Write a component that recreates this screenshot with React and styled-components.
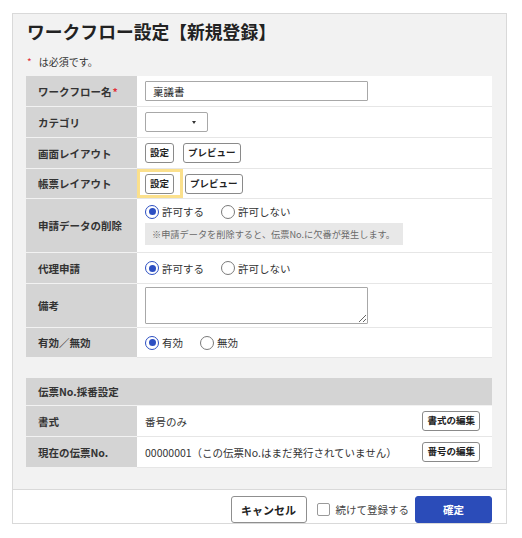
import React from 'react';
import styled, { createGlobalStyle, css } from 'styled-components';

const GlobalStyle = createGlobalStyle`
  * { box-sizing: border-box; }
  body {
    margin: 0;
    background: #ffffff;
    font-family: "Noto Sans CJK JP", "Noto Sans", sans-serif;
    color: #333;
  }
`;

const Panel = styled.div`
  width: 495px;
  margin: 13px 0 0 12px;
  background: #f2f2f2;
  border: 1px solid #d9d9d9;
`;

const Body = styled.div`
  padding: 5px 14px 21px 13px;
`;

const Title = styled.h1`
  margin: 0 0 0 1px;
  font-size: 17.8px;
  line-height: 24px;
  font-weight: bold;
  color: #222;
`;

const Required = styled.p`
  margin: 11px 0 6px 1px;
  font-size: 10px;
  line-height: 16px;
  color: #333;
`;

const Star = styled.span`
  color: #e2303a;
  margin-right: ${(p) => p.$gap ?? 0}px;
  margin-left: ${(p) => p.$lead ?? 0}px;
`;

const Table = styled.div`
  display: flex;
  flex-direction: column;
`;

const Row = styled.div`
  display: grid;
  grid-template-columns: 111px 1fr;
  min-height: ${(p) => p.$h}px;
  border-bottom: 1px solid #e6e6e6;
`;

const Label = styled.div`
  display: flex;
  align-items: center;
  padding-left: 12px;
  background: #d4d4d4;
  border-bottom: 1px solid #f2f2f2;
  margin-bottom: -1px;
  font-size: 10.5px;
  font-weight: bold;
  color: #333;
`;

const Value = styled.div`
  display: flex;
  flex-direction: ${(p) => (p.$stack ? 'column' : 'row')};
  align-items: ${(p) => (p.$stack ? 'flex-start' : 'center')};
  gap: ${(p) => p.$gap ?? 9}px;
  padding: ${(p) => (p.$stack ? '5px 0 4px 8px' : '0 12px 0 8px')};
  background: #ffffff;
  font-size: 10.5px;
  color: #333;
`;

const Spacer = styled.div`
  flex: 1;
`;

const TextInput = styled.div`
  width: 223px;
  height: 20px;
  border: 1px solid #a8a8a8;
  border-radius: 1px;
  padding-left: 7px;
  display: flex;
  align-items: center;
  font-size: 10.5px;
  color: #222;
`;

const Select = styled.div`
  width: 63px;
  height: 20px;
  border: 1px solid #a8a8a8;
  border-radius: 2px;
  background: #fff;
  display: flex;
  align-items: center;
  justify-content: flex-end;
  padding-right: 11px;
`;

const Caret = styled.span`
  width: 0;
  height: 0;
  border-left: 2.5px solid transparent;
  border-right: 2.5px solid transparent;
  border-top: 3px solid #333;
`;

const SmallButton = styled.button`
  height: 20px;
  padding: 0 4px;
  background: #fff;
  border: 1px solid #8a8a8a;
  border-radius: 3px;
  font-family: inherit;
  font-size: 9.5px;
  font-weight: bold;
  color: #222;
  line-height: 1;
`;

const FocusFrame = styled.div`
  display: flex;
  align-items: center;
  align-self: stretch;
  margin: 0 -7px 0 -8px;
  padding: 0 6px 0 5px;
  border: 3px solid #fbe08c;
`;

const RadioGroup = styled.div`
  display: flex;
  align-items: center;
  gap: 17px;
`;

const RadioItem = styled.label`
  display: flex;
  align-items: center;
  gap: 3px;
  font-size: 10.5px;
  color: #333;
`;

const RadioMark = styled.span`
  width: 14px;
  height: 14px;
  border-radius: 50%;
  background: #fff;
  border: 1px solid #7a7a7a;
  display: inline-flex;
  align-items: center;
  justify-content: center;
  ${(p) =>
    p.$on &&
    css`
      border: 1.5px solid #2c4fc2;
      &::after {
        content: '';
        width: 7px;
        height: 7px;
        border-radius: 50%;
        background: #2c4fc2;
      }
    `}
`;

const Note = styled.div`
  margin-top: 4px;
  height: 22px;
  padding: 0 8px 0 7px;
  background: #e8e8e8;
  display: flex;
  align-items: center;
  font-size: 9.2px;
  color: #6a6a6a;
`;

const TextArea = styled.textarea`
  width: 223px;
  height: 37px;
  border: 1px solid #a8a8a8;
  border-radius: 1px;
  font-family: inherit;
  margin: 0;
`;

const SectionHead = styled.div`
  margin-top: 20px;
  height: 28px;
  padding-left: 12px;
  display: flex;
  align-items: center;
  background: #d4d4d4;
  border-bottom: 1px solid #f2f2f2;
  font-size: 10.5px;
  font-weight: bold;
  color: #333;
`;

const Footer = styled.div`
  height: 34px;
  background: #fff;
  border-top: 1px solid #d9d9d9;
  display: flex;
  justify-content: flex-end;
  align-items: flex-start;
  padding: 6px 14px 0 0;
`;

const BigButton = styled.button`
  height: 27px;
  width: ${(p) => p.$w}px;
  border-radius: 3px;
  font-family: inherit;
  font-weight: bold;
  ${(p) =>
    p.$primary
      ? css`
          background: #2b4cb9;
          border: 1px solid #2b4cb9;
          color: #fff;
          font-size: 10.5px;
        `
      : css`
          background: #fff;
          border: 1px solid #8f8f8f;
          color: #222;
          font-size: 11px;
        `}
`;

const Check = styled.label`
  display: flex;
  align-items: center;
  gap: 6px;
  height: 27px;
  margin: 0 6px 0 10px;
  font-size: 10.5px;
  color: #444;
`;

const Box = styled.span`
  width: 13px;
  height: 13px;
  border: 1px solid #9a9a9a;
  border-radius: 2px;
  background: #fff;
  margin-top: -1px;
`;

const Radio = ({ on, children }) => (
  <RadioItem>
    <RadioMark $on={on} />
    {children}
  </RadioItem>
);

export default function App() {
  return (
    <>
      <GlobalStyle />
      <Panel>
        <Body>
          <Title>ワークフロー設定【新規登録】</Title>
          <Required>
            <Star $gap={7}>*</Star>は必須です。
          </Required>

          <Table>
            <Row $h={31}>
              <Label>
                ワークフロー名<Star $lead={1}>*</Star>
              </Label>
              <Value>
                <TextInput>稟議書</TextInput>
              </Value>
            </Row>
            <Row $h={31}>
              <Label>カテゴリ</Label>
              <Value>
                <Select>
                  <Caret />
                </Select>
              </Value>
            </Row>
            <Row $h={31}>
              <Label>画面レイアウト</Label>
              <Value>
                <SmallButton>設定</SmallButton>
                <SmallButton>プレビュー</SmallButton>
              </Value>
            </Row>
            <Row $h={30}>
              <Label>帳票レイアウト</Label>
              <Value>
                <FocusFrame>
                  <SmallButton>設定</SmallButton>
                </FocusFrame>
                <SmallButton>プレビュー</SmallButton>
              </Value>
            </Row>
            <Row $h={54}>
              <Label>申請データの削除</Label>
              <Value $stack $gap={0}>
                <RadioGroup>
                  <Radio on>許可する</Radio>
                  <Radio>許可しない</Radio>
                </RadioGroup>
                <Note>※申請データを削除すると、伝票No.に欠番が発生します。</Note>
              </Value>
            </Row>
            <Row $h={31}>
              <Label>代理申請</Label>
              <Value>
                <RadioGroup>
                  <Radio on>許可する</Radio>
                  <Radio>許可しない</Radio>
                </RadioGroup>
              </Value>
            </Row>
            <Row $h={44}>
              <Label>備考</Label>
              <Value>
                <TextArea readOnly />
              </Value>
            </Row>
            <Row $h={30}>
              <Label>有効／無効</Label>
              <Value>
                <RadioGroup>
                  <Radio on>有効</Radio>
                  <Radio>無効</Radio>
                </RadioGroup>
              </Value>
            </Row>
          </Table>

          <SectionHead>伝票No.採番設定</SectionHead>
          <Table>
            <Row $h={31}>
              <Label>書式</Label>
              <Value>
                番号のみ
                <Spacer />
                <SmallButton>書式の編集</SmallButton>
              </Value>
            </Row>
            <Row $h={31}>
              <Label>現在の伝票No.</Label>
              <Value>
                00000001（この伝票No.はまだ発行されていません）
                <Spacer />
                <SmallButton>番号の編集</SmallButton>
              </Value>
            </Row>
          </Table>
        </Body>
        <Footer>
          <BigButton $w={76}>キャンセル</BigButton>
          <Check>
            <Box />
            続けて登録する
          </Check>
          <BigButton $primary $w={77}>
            確定
          </BigButton>
        </Footer>
      </Panel>
    </>
  );
}
